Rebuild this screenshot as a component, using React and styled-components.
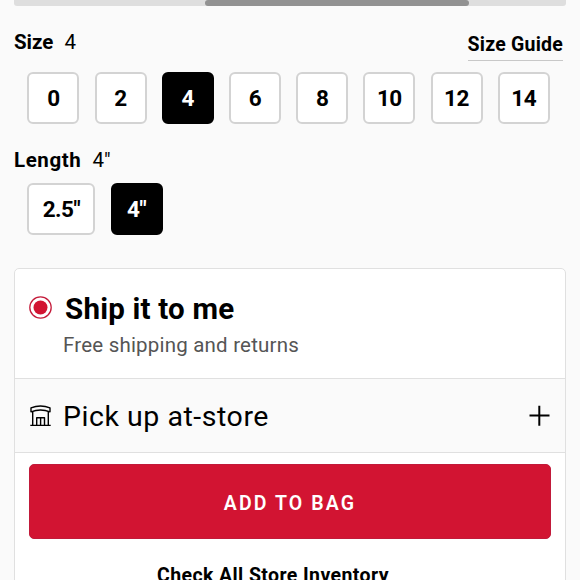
import styled, { createGlobalStyle } from "styled-components"

const GlobalStyle = createGlobalStyle`
  * {
    box-sizing: border-box;
  }

  body {
    margin: 0;
    height: 580px;
    overflow: hidden;
    background-color: #fafafa;
    color: #000;
    font-family: Roboto, "Liberation Sans", sans-serif;
  }

  button {
    padding: 0;
    font-family: inherit;
    cursor: pointer;
  }
`

const Page = styled.main`
  width: 580px;
  height: 580px;
  padding: 0 14px;
  overflow: hidden;
`

const ScrollTrack = styled.div`
  height: 6px;
  padding-left: 191px;
  border-radius: 0 0 3px 3px;
  background-color: #dedede;
`

const ScrollThumb = styled.div`
  width: 264px;
  height: 6px;
  border-radius: 3px;
  background-color: #929292;
`

const OptionHeader = styled.div`
  display: flex;
  justify-content: space-between;
  height: ${({ $height }) => $height}px;
  padding-top: 24px;
`

const OptionLabel = styled.span`
  font-size: 20.5px;
  font-weight: 700;
  line-height: 24px;
  letter-spacing: ${({ $spacing = 0 }) => $spacing}px;
`

const OptionValue = styled.span`
  margin-left: 11px;
  font-weight: 400;
  letter-spacing: 0;
`

const SizeGuide = styled.a`
  height: 29px;
  margin: 2px 3px 0 0;
  border-bottom: 1px solid #c8c8c8;
  color: #000;
  font-size: 19.5px;
  font-weight: 700;
  line-height: 25px;
  letter-spacing: 0.22px;
  text-decoration: none;
`

const Options = styled.div`
  display: flex;
  gap: 15.2px;
  padding-left: 13.4px;
`

const OptionButton = styled.button`
  width: ${({ $wide }) => ($wide ? 68 : 52)}px;
  height: 52px;
  border: 2px solid ${({ $selected }) => ($selected ? "#000" : "#d3d3d3")};
  border-radius: 6px;
  background-color: ${({ $selected }) => ($selected ? "#000" : "#fff")};
  color: ${({ $selected }) => ($selected ? "#fff" : "#000")};
  font-size: 22.5px;
  font-weight: 700;
  line-height: 48px;
  letter-spacing: -0.5px;
`

const Card = styled.section`
  height: 330px;
  margin-top: 33px;
  border: 1px solid #e0e0e0;
  border-radius: 5px;
  background-color: #fff;
`

const ShipRow = styled.div`
  display: flex;
  height: 110px;
  padding: 22px 14px 0;
  border-bottom: 1px solid #e0e0e0;

  svg {
    margin: 5px 11px 0 0;
  }
`

const ShipTitle = styled.h2`
  margin: 0 0 0 2px;
  font-size: 29.5px;
  font-weight: 700;
  line-height: 36px;
  letter-spacing: 0.22px;
`

const ShipNote = styled.p`
  margin: 5px 0 0;
  color: #555;
  font-size: 20.5px;
  line-height: 26px;
  letter-spacing: 0.2px;
`

const PickupRow = styled.div`
  display: flex;
  align-items: center;
  height: 74px;
  padding: 0 15px 0 14px;
  border-bottom: 1px solid #e0e0e0;
  background-color: #fafafa;
`

const PickupTitle = styled.h2`
  flex: 1;
  margin: 3px 0 0 11px;
  font-size: 28.5px;
  font-weight: 400;
  line-height: 36px;
  letter-spacing: 0.54px;
`

const BagButton = styled.button`
  display: block;
  width: 522px;
  height: 75px;
  margin: 11px auto 24px;
  padding-top: 3px;
  border: 1px solid #c11a3a;
  border-radius: 5px;
  background-color: #d21432;
  color: #fff;
  font-size: 19.5px;
  font-weight: 600;
  letter-spacing: 2.1px;
`

const InventoryLink = styled.a`
  display: block;
  margin-left: 142px;
  color: #000;
  font-size: 19.5px;
  font-weight: 700;
  line-height: 26px;
  letter-spacing: 0.4px;
  white-space: nowrap;
`

const sizes = ["0", "2", "4", "6", "8", "10", "12", "14"]

function RadioIcon() {
  return (
    <svg width="23" height="23" viewBox="0 0 23 23">
      <circle cx="11.5" cy="11.5" r="10.7" fill="none" stroke="#c51c3b" strokeWidth="1.3" />
      <circle cx="11.5" cy="11.5" r="7" fill="#d21432" />
    </svg>
  )
}

function StoreIcon() {
  return (
    <svg
      width="23"
      height="22"
      viewBox="0 0 23 22"
      fill="none"
      stroke="#000"
      strokeWidth="1.4"
      strokeLinejoin="round"
    >
      <path d="M2 2.9Q11.5-.9 21 2.9V6.8Q11.5 3.2 2 6.8Z" />
      <path d="M3.7 6.5V20M19.3 6.5V20M1.3 20.4H21.7" />
      <path d="M7.7 20V12.8H15.5V20M11.6 12.8V20" />
    </svg>
  )
}

function PlusIcon() {
  return (
    <svg width="21" height="21" viewBox="0 0 21 21" stroke="#000" strokeWidth="2">
      <path d="M.5 10.5H20.5M10.3 .7V20.7" />
    </svg>
  )
}

function App() {
  return (
    <Page>
      <GlobalStyle />

      <ScrollTrack>
        <ScrollThumb />
      </ScrollTrack>

      <OptionHeader $height={66}>
        <OptionLabel>
          Size<OptionValue>4</OptionValue>
        </OptionLabel>
        <SizeGuide>Size Guide</SizeGuide>
      </OptionHeader>
      <Options>
        {sizes.map((size) => (
          <OptionButton key={size} $selected={size === "4"}>
            {size}
          </OptionButton>
        ))}
      </Options>

      <OptionHeader $height={59}>
        <OptionLabel $spacing={0.6}>
          Length<OptionValue>4"</OptionValue>
        </OptionLabel>
      </OptionHeader>
      <Options>
        <OptionButton $wide>2.5"</OptionButton>
        <OptionButton $selected>4"</OptionButton>
      </Options>

      <Card>
        <ShipRow>
          <RadioIcon />
          <div>
            <ShipTitle>Ship it to me</ShipTitle>
            <ShipNote>Free shipping and returns</ShipNote>
          </div>
        </ShipRow>
        <PickupRow>
          <StoreIcon />
          <PickupTitle>Pick up at-store</PickupTitle>
          <PlusIcon />
        </PickupRow>
        <BagButton>ADD TO BAG</BagButton>
        <InventoryLink>Check All Store Inventory</InventoryLink>
      </Card>
    </Page>
  )
}

export default App
